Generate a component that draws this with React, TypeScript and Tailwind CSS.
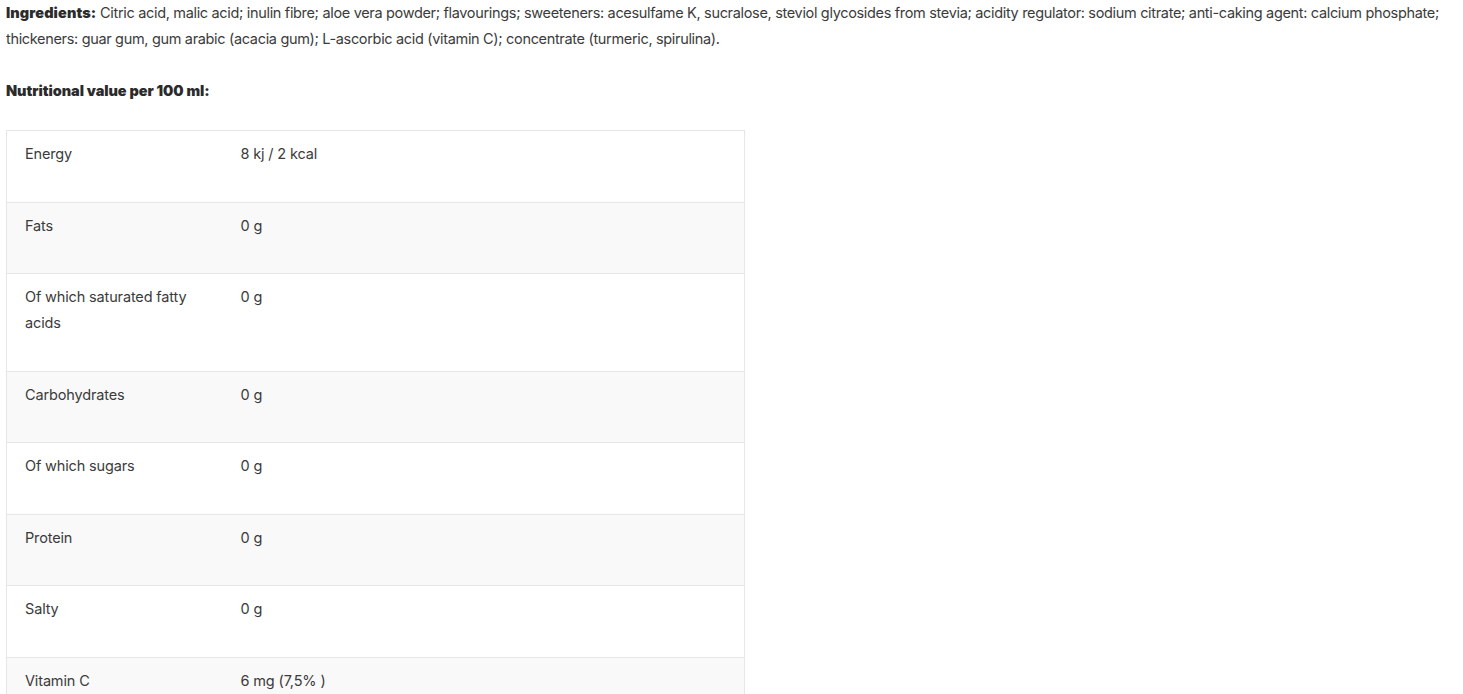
const rows: [string, string][] = [
  ['Energy', '8 kj / 2 kcal'],
  ['Fats', '0 g'],
  ['Of which saturated fatty acids', '0 g'],
  ['Carbohydrates', '0 g'],
  ['Of which sugars', '0 g'],
  ['Protein', '0 g'],
  ['Salty', '0 g'],
  ['Vitamin C', '6 mg (7,5% )'],
];

export default function App() {
  return (
    <div className="min-h-screen bg-white px-[6px] font-['Inter',sans-serif] text-[14.5px] leading-[26px] tracking-[-0.15px] text-[#3b3b3b]">
      <p className="tracking-[-0.33px]">
        <strong className="font-black tracking-[0.1px] text-[#2b2b2b]">Ingredients:</strong> Citric acid, malic acid; inulin
        fibre; aloe vera powder; flavourings; sweeteners: acesulfame K, sucralose, steviol glycosides from stevia; acidity
        regulator: sodium citrate; anti-caking agent: calcium phosphate; thickeners: guar gum, gum arabic (acacia gum);
        L-ascorbic acid (vitamin C); concentrate (turmeric, spirulina).
      </p>
      <p className="mt-[26px] font-black tracking-[-0.05px] text-[#2b2b2b]">Nutritional value per 100 ml:</p>
      <table className="mt-[26px] w-[739px] border-collapse border border-[#e6e6e6]">
        <tbody>
          {rows.map(([name, value], i) => (
            <tr key={name} className={`border-t border-[#e6e6e6] ${i % 2 === 1 ? 'bg-[#f9f9f9]' : 'bg-white'}`}>
              <td className="w-[216px] px-[18px] pt-[10px] pb-[34.5px] align-top">{name}</td>
              <td className="px-[18px] pt-[10px] pb-[34.5px] align-top">{value}</td>
            </tr>
          ))}
        </tbody>
      </table>
    </div>
  );
}
